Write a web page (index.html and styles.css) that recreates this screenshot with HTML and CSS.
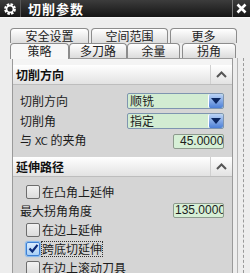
FILE: index.html
```html
<!DOCTYPE html>
<html lang="zh">
<head>
  <meta charset="UTF-8">
  <title>切削参数</title>
  <link rel="stylesheet" href="styles.css">
</head>
<body>
<div class="window">
  <div class="titlebar">
    <span class="gear">
      <svg width="14" height="14" viewBox="0 0 14 14">
        <circle cx="7" cy="7" r="4.6" fill="none" stroke="#fff" stroke-width="2.6" stroke-dasharray="2.4 1.2"/>
        <circle cx="7" cy="7" r="3.4" fill="none" stroke="#fff" stroke-width="1.6"/>
      </svg>
    </span>
    <span class="title">切削参数</span>
    <span class="close">
      <svg width="11" height="11" viewBox="0 0 11 11">
        <path d="M1.5 1.5 L9.5 9.5 M9.5 1.5 L1.5 9.5" stroke="#fff" stroke-width="2.6"/>
      </svg>
    </span>
  </div>

  <div class="tabs">
    <div class="tab-row back">
      <div class="tab t-safe">安全设置</div>
      <div class="tab t-space">空间范围</div>
      <div class="tab t-more">更多</div>
    </div>
    <div class="tab-row front">
      <div class="tab t-strat active">策略</div>
      <div class="tab t-multi">多刀路</div>
      <div class="tab t-stock">余量</div>
      <div class="tab t-corner">拐角</div>
    </div>
  </div>

  <div class="main">
    <div class="panel">
      <div class="section-head">
        <span class="head-text">切削方向</span>
        <span class="toggle">
          <svg width="11" height="7" viewBox="0 0 11 7"><path d="M1 6 L5.5 1.5 L10 6" fill="none" stroke="#555" stroke-width="2"/></svg>
        </span>
      </div>
      <div class="section-body first">
        <div class="row">
          <span class="label">切削方向</span>
          <div class="select"><span class="select-text">顺铣</span><span class="select-btn"></span></div>
        </div>
        <div class="row">
          <span class="label">切削角</span>
          <div class="select"><span class="select-text">指定</span><span class="select-btn"></span></div>
        </div>
        <div class="row">
          <span class="label">与 <span class="small">XC</span> 的夹角</span>
          <div class="field pad-wide">45.00000</div>
        </div>
      </div>

      <div class="section-head">
        <span class="head-text">延伸路径</span>
        <span class="toggle">
          <svg width="11" height="7" viewBox="0 0 11 7"><path d="M1 6 L5.5 1.5 L10 6" fill="none" stroke="#555" stroke-width="2"/></svg>
        </span>
      </div>
      <div class="section-body second">
        <div class="row">
          <label class="check"><span class="box"></span>在凸角上延伸</label>
        </div>
        <div class="row">
          <span class="label">最大拐角角度</span>
          <div class="field pad-narrow">135.00000</div>
        </div>
        <div class="row">
          <label class="check"><span class="box"></span>在边上延伸</label>
        </div>
        <div class="row">
          <label class="check"><span class="box checked">
            <svg width="11" height="11" viewBox="0 0 11 11"><path d="M1.5 5.5 L4.3 8.5 L9.5 1.8" fill="none" stroke="#0b2a78" stroke-width="2.2"/></svg>
          </span><span class="focus">跨底切延伸</span></label>
        </div>
        <div class="row">
          <label class="check"><span class="box"></span>在边上滚动刀具</label>
        </div>
      </div>
    </div>
    <div class="side"></div>
  </div>
</div>
</body>
</html>
```

FILE: styles.css
```css
body {
  margin: 0;
  width: 250px;
  height: 273px;
  overflow: hidden;
  background-color: #ededed;
  font-family: "Noto Sans CJK SC", "DejaVu Sans", sans-serif;
  font-size: 12px;
  color: #1c1c1c;
}
.window {
  height: 273px;
}
.titlebar {
  height: 17px;
  display: flex;
  align-items: center;
  background: linear-gradient(#3c3c3c, #151515);
  border-bottom: 1px solid #f6f6f6;
}
.gear {
  width: 20px;
  height: 17px;
  display: flex;
  align-items: center;
  justify-content: center;
  border-right: 1px solid #555;
}
.title {
  margin-left: 7px;
  color: #fff;
  font-weight: bold;
  font-size: 13px;
  letter-spacing: 1px;
  flex: 1;
  line-height: 17px;
}
.close {
  width: 17px;
  height: 17px;
  display: flex;
  align-items: center;
  justify-content: center;
  border-left: 1px solid #7a7a7a;
}

/* tabs */
.tabs {
  margin-top: 10px;
  height: 30px;
}
.tab-row {
  display: flex;
  height: 15px;
}
.tab {
  box-sizing: border-box;
  height: 15px;
  border: 1px solid #8c8c8c;
  border-bottom: none;
  border-radius: 4px 4px 0 0;
  background: linear-gradient(#ffffff, #dcdcdc);
  text-align: center;
  line-height: 14px;
  font-size: 12px;
  color: #222;
  overflow: hidden;
}
.t-safe { margin-left: 10px; width: 79px; }
.t-space { margin-left: 2px; width: 77px; }
.t-more { margin-left: 2px; width: 67px; }
.t-strat { margin-left: 10px; width: 59px; }
.t-multi { width: 58px; }
.t-stock { width: 53px; }
.t-corner { margin-left: 2px; width: 54px; }
.tab.active {
  background: #f7f7f7;
  height: 16px;
  position: relative;
  z-index: 1;
}

/* panel */
.main {
  display: flex;
  height: 215px;
}
.panel {
  margin-left: 12px;
  width: 221px;
  border-left: 1px solid #9a9a9a;
  border-right: 1px solid #9a9a9a;
  border-top: 1px solid #9a9a9a;
  background-color: #f4f4f4;
  padding-top: 6px;
  box-sizing: border-box;
  overflow: hidden;
}
.side {
  margin-left: 4px;
  width: 5px;
  border-left: 1px solid #b4b4b4;
  border-right: 1px dashed #9a9a9a;
}
.section-head {
  height: 19px;
  display: flex;
  align-items: center;
  background: linear-gradient(#ffffff, #e2e2e2);
  border-bottom: 1px solid #bdbdbd;
}
.head-text {
  flex: 1;
  padding-left: 3px;
  font-weight: bold;
  color: #111;
}
.toggle {
  width: 21px;
  height: 19px;
  display: flex;
  align-items: center;
  justify-content: center;
  border-left: 1px solid #d0d0d0;
}
.section-body {
  background-color: #d5d5d5;
}
.section-body.first {
  padding: 6px 0 6px;
}
.section-body.second {
  padding-top: 5px;
  height: 120px;
}
.section-body.first .row {
  height: 20px;
}
.section-body.second .row {
  height: 19px;
}
.row {
  display: flex;
  align-items: center;
  justify-content: space-between;
  padding-left: 7px;
  padding-right: 8px;
}
.label {
  line-height: 14px;
}
.small {
  font-size: 10px;
  font-family: "DejaVu Sans", sans-serif;
  text-transform: uppercase;
}
.select {
  box-sizing: border-box;
  width: 97px;
  height: 16px;
  display: flex;
  border: 1px solid #7f95b0;
  border-radius: 2px;
  background-color: #d2ecd2;
}
.select-text {
  flex: 1;
  padding-left: 2px;
  line-height: 14px;
}
.select-btn {
  width: 14px;
  background: linear-gradient(#bcd4f6, #4c7fd6);
  border-left: 1px solid #fff;
  border-radius: 2px;
  position: relative;
}
.select-btn::after {
  content: "";
  position: absolute;
  left: 2px;
  top: 4px;
  border-left: 5px solid transparent;
  border-right: 5px solid transparent;
  border-top: 6px solid #0b2660;
}
.field {
  box-sizing: border-box;
  width: 51px;
  height: 15px;
  border: 1px solid #8d9a8d;
  border-radius: 2px;
  background-color: #d6efd6;
  overflow: hidden;
  white-space: nowrap;
  font-family: "Liberation Sans", sans-serif;
  font-size: 12px;
  line-height: 13px;
}
.pad-wide { padding-left: 6px; }
.pad-narrow { padding-left: 1px; }
.check {
  display: flex;
  align-items: center;
  margin-left: 6px;
}
.box {
  box-sizing: border-box;
  width: 14px;
  height: 14px;
  margin-right: 2px;
  border: 1px solid #6d6d6d;
  border-radius: 2px;
  background: linear-gradient(#f2f2f2, #dcdcdc);
  display: flex;
  align-items: center;
  justify-content: center;
}
.box.checked {
  border-color: #3d7fd4;
  background: linear-gradient(#d9ecff, #a9cff5);
  box-shadow: 0 0 1px 1px #7fb6ef;
}
.focus {
  outline: 1px dotted #333;
  line-height: 14px;
}
```
